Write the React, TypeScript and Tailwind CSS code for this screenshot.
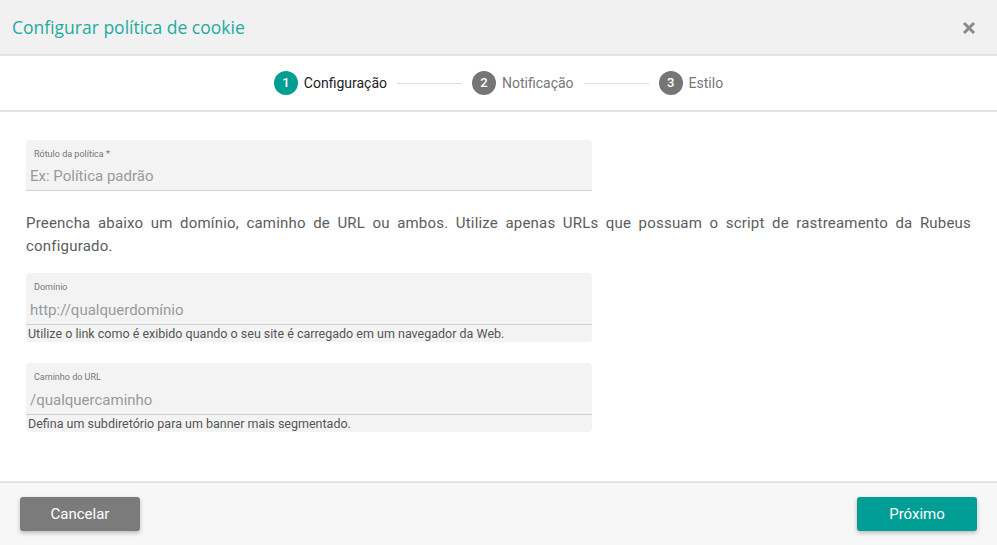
import React from "react";

const roboto = { fontFamily: "Roboto, 'Liberation Sans', sans-serif" };

function Step({ n, label, active }: { n: number; label: string; active?: boolean }) {
  return (
    <div className="flex items-center gap-[6px]">
      <span
        className={
          active
            ? "flex h-6 w-6 items-center justify-center rounded-full bg-[#009e92] text-[13px] font-medium text-white"
            : "flex h-6 w-6 items-center justify-center rounded-full bg-[#757575] text-[13px] font-medium text-white"
        }
      >
        {n}
      </span>
      <span className={active ? "text-[14px] text-[#222]" : "text-[14px] text-[#777]"}>{label}</span>
    </div>
  );
}

function Field({ label, placeholder, help }: { label: string; placeholder: string; help?: string }) {
  return (
    <div className={help ? "w-[566px] rounded-[4px] bg-[#f3f3f3]" : "w-[566px] rounded-t-[4px] bg-[#f3f3f3]"}>
      <div className="px-2 pt-[9px] text-[9px] leading-[11px] text-[#777]">{label}</div>
      <div
        className={
          help
            ? "h-[32px] border-b border-[#cfcfcf] px-1 pt-[3px] text-[15px] leading-[28px] text-[#9a9a9a]"
            : "h-[31px] border-b border-[#cfcfcf] px-1 pt-[2px] text-[15px] leading-[28px] text-[#9a9a9a]"
        }
      >
        {placeholder}
      </div>
      {help && <div className="px-[2px] text-[12.5px] leading-[17px] text-[#555]">{help}</div>}
    </div>
  );
}

export default function App() {
  return (
    <div className="flex h-[545px] w-full flex-col bg-white" style={roboto}>
      {/* Header */}
      <div className="flex h-[56px] items-center justify-between border-b-2 border-[#e4e4e4] bg-[#f1f1f1] pl-3 pr-[22px]">
        <h1
          className="text-[17.5px] text-[#22aca1]"
          style={{ fontFamily: "'Open Sans', 'Noto Sans', sans-serif" }}
        >
          Configurar política de cookie
        </h1>
        <svg width="12" height="12" viewBox="0 0 12 12" className="mt-[2px]">
          <path d="M2 2 L10 10 M10 2 L2 10" stroke="#8a8a8a" strokeWidth="3" strokeLinecap="square" />
        </svg>
      </div>

      {/* Stepper */}
      <div className="flex h-[56px] items-center justify-center gap-[10px] border-b-2 border-[#e4e4e4]">
        <Step n={1} label="Configuração" active />
        <span className="h-px w-[65px] bg-[#dcdcdc]" />
        <Step n={2} label="Notificação" />
        <span className="h-px w-[65px] bg-[#dcdcdc]" />
        <Step n={3} label="Estilo" />
      </div>

      {/* Body */}
      <div className="flex-1 px-[26px] pt-[28px]">
        <Field label="Rótulo da política *" placeholder="Ex: Política padrão" />
        <p className="mt-[21px] text-justify text-[15px] leading-[23px] tracking-[0.2px] text-[#5c5c5c]">
          Preencha abaixo um domínio, caminho de URL ou ambos. Utilize apenas URLs que possuam o script de rastreamento da Rubeus configurado.
        </p>
        <div className="mt-[15px]">
          <Field
            label="Domínio"
            placeholder="http://qualquerdomínio"
            help="Utilize o link como é exibido quando o seu site é carregado em um navegador da Web."
          />
        </div>
        <div className="mt-[21px]">
          <Field
            label="Caminho do URL"
            placeholder="/qualquercaminho"
            help="Defina um subdiretório para um banner mais segmentado."
          />
        </div>
      </div>

      {/* Footer */}
      <div className="flex h-[64px] items-center justify-between border-t-2 border-[#e4e4e4] bg-[#f7f7f7] px-5">
        <button className="h-[34px] w-[120px] rounded-[3px] bg-[#7b7b7b] text-[15px] text-white shadow-[0_2px_4px_rgba(0,0,0,0.25)]">
          Cancelar
        </button>
        <button className="h-[34px] w-[120px] rounded-[3px] bg-[#009e94] text-[15px] text-white shadow-[0_2px_4px_rgba(0,0,0,0.25)]">
          Próximo
        </button>
      </div>
    </div>
  );
}
